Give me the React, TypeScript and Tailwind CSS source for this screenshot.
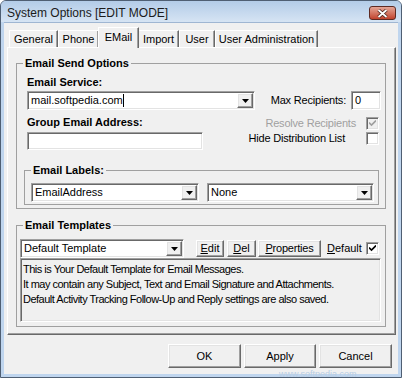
import React from 'react';

// classic 3D borders
const sunken =
  'border border-t-[#a0a0a0] border-l-[#a0a0a0] border-b-white border-r-white shadow-[inset_1px_1px_0_#696969,inset_-1px_-1px_0_#e3e3e3]';
const raised =
  'border border-t-white border-l-white border-b-[#696969] border-r-[#696969] shadow-[inset_-1px_-1px_0_#a0a0a0,inset_1px_1px_0_#e3e3e3]';

const Arrow = () => (
  <svg width="7" height="4" viewBox="0 0 7 4">
    <path d="M0 0h7L3.5 4z" fill="#000" />
  </svg>
);

const Combo = ({ value, className = '', caret = false }: { value: string; className?: string; caret?: boolean }) => (
  <div className={`${sunken} bg-white p-[1px] flex items-stretch ${className}`}>
    <span className="flex-1 flex items-center pl-[2px] leading-[13px] whitespace-nowrap">
      {value}
      {caret && <span className="inline-block w-[1px] h-[13px] bg-black" />}
    </span>
    <span className={`${raised} bg-[#f0f0f0] w-[16px] flex items-center justify-center`}>
      <Arrow />
    </span>
  </div>
);

const Check = ({ checked = false, disabled = false }: { checked?: boolean; disabled?: boolean }) => (
  <span className={`${sunken} w-[13px] h-[13px] flex items-center justify-center ${disabled ? 'bg-[#f0f0f0]' : 'bg-white'}`}>
    {checked && (
      <svg width="7" height="7" viewBox="0 0 7 7">
        <path d="M0 2.5l2.5 2.5L7 0.5" stroke={disabled ? '#a0a0a0' : '#000'} strokeWidth="1.6" fill="none" />
      </svg>
    )}
  </span>
);

const Btn = ({ children, className = '' }: { children: React.ReactNode; className?: string }) => (
  <button className={`${raised} bg-[#f0f0f0] flex items-center justify-center leading-[13px] ${className}`}>{children}</button>
);

const tabs = [
  { label: 'General', w: 'w-[49px]' },
  { label: 'Phone', w: 'w-[41px]' },
  { label: 'EMail', w: 'w-[41px]', active: true },
  { label: 'Import', w: 'w-[41px]' },
  { label: 'User', w: 'w-[36px]' },
  { label: 'User Administration', w: 'w-[103px]' },
];

export default function App() {
  return (
    <div className="relative w-[402px] h-[378px] bg-[#bfd5ee] border border-[#4f5f73] rounded-t-[6px] flex flex-col text-[11px] text-black font-['Liberation_Sans',Arial,sans-serif] overflow-hidden">
      {/* title bar */}
      <div className="h-[21px] flex items-center justify-between pl-[6px] pr-[5px] bg-gradient-to-b from-[#b3cce8] to-[#d6e4f3]">
        <span className="text-[12px] leading-[14px] text-[#1b1b1b] pt-[2px]">System Options [EDIT MODE]</span>
        <span className="w-[27px] h-[14px] mt-[3px] rounded-[3px] border border-[#5e2a22] bg-gradient-to-b from-[#e3a596] to-[#c1412c] flex items-center justify-center">
          <svg width="11" height="9" viewBox="0 0 11 9">
            <path d="M1.5 1l8 7M9.5 1l-8 7" stroke="#4a211a" strokeWidth="3.4" />
            <path d="M1.5 1l8 7M9.5 1l-8 7" stroke="#fff" strokeWidth="1.8" />
          </svg>
        </span>
      </div>

      {/* client area */}
      <div className="flex-1 mx-[3px] mb-[3px] bg-[#f0f0f0] border-t border-[#9fb6d2] flex flex-col">
        {/* tab strip */}
        <div className="pt-[3px] pl-[5px] h-[24px] flex items-end">
          {tabs.map((t) =>
            t.active ? (
              <div
                key={t.label}
                className={`${t.w} h-[21px] -mx-[1px] relative z-10 -mb-[1px] bg-[#f0f0f0] border-t border-l border-white border-r border-r-[#696969] shadow-[inset_-1px_0_0_#a0a0a0] flex items-start justify-center pt-[3px] leading-[13px]`}
              >
                {t.label}
              </div>
            ) : (
              <div
                key={t.label}
                className={`${t.w} h-[17px] border-t border-l border-white border-r border-r-[#696969] shadow-[inset_-1px_0_0_#a0a0a0] flex items-center justify-center leading-[13px]`}
              >
                {t.label}
              </div>
            )
          )}
        </div>

        {/* tab panel */}
        <div className="ml-[3px] w-[389px] h-[288px] border border-t-white border-l-white border-b-[#696969] border-r-[#696969] shadow-[inset_-1px_-1px_0_#a0a0a0] pl-[8px] pt-[9px]">
          {/* Email Send Options */}
          <fieldset className="w-[370px] border border-[#a0a0a0]">
            <legend className="ml-[6px] px-[2px] font-bold leading-[13px]">Email Send Options</legend>
            <div className="pl-[10px] pr-[4px] pt-[6px] pb-[3px]">
              <div className="flex items-end justify-between">
                <div className="flex flex-col">
                  <span className="font-bold leading-[13px]">Email Service:</span>
                  <Combo value="mail.softpedia.com" caret className="mt-[2px] w-[228px] h-[19px]" />
                </div>
                <div className="flex items-center gap-[5px]">
                  <span className="leading-[13px] tracking-[-0.2px]">Max Recipients:</span>
                  <div className={`${sunken} bg-white w-[30px] h-[19px] pl-[3px] flex items-center leading-[13px]`}>0</div>
                </div>
              </div>

              <div className="mt-[6px] flex items-start justify-between">
                <div className="flex flex-col">
                  <span className="font-bold leading-[13px]">Group Email Address:</span>
                  <div className={`${sunken} bg-white mt-[3px] w-[176px] h-[18px]`} />
                </div>
                <div className="flex flex-col items-end pr-[2px] tracking-[-0.2px]">
                  <div className="h-[15px] flex items-center">
                    <span className="text-[#a0a0a0] leading-[13px] mr-[10px]">Resolve Recipients</span>
                    <Check checked disabled />
                  </div>
                  <div className="h-[15px] flex items-center">
                    <span className="leading-[13px] mr-[21px]">Hide Distribution List</span>
                    <Check />
                  </div>
                </div>
              </div>

              <fieldset className="mt-[14px] -ml-[3px] mr-[2px] border border-[#a0a0a0] pl-[6px] pr-[4px] pt-[6px] pb-[2px]">
                <legend className="ml-[0px] px-[2px] font-bold leading-[13px]">Email Labels:</legend>
                <div className="flex gap-[8px]">
                  <Combo value="EmailAddress" className="w-[168px] h-[19px]" />
                  <Combo value="None" className="w-[167px] h-[19px]" />
                </div>
              </fieldset>
            </div>
          </fieldset>

          {/* Email Templates */}
          <fieldset className="mt-[10px] w-[370px] border border-[#a0a0a0]">
            <legend className="ml-[6px] px-[2px] font-bold leading-[13px]">Email Templates</legend>
            <div className="pl-[3px] pr-[3px] pt-[7px] pb-[4px]">
              <div className="flex items-center">
                <Combo value="Default Template" className="w-[164px] h-[19px]" />
                <Btn className="ml-[12px] w-[28px] h-[17px]"><span className="underline">E</span>dit</Btn>
                <Btn className="ml-[3px] w-[29px] h-[17px]"><span className="underline">D</span>el</Btn>
                <Btn className="ml-[2px] w-[63px] h-[17px] tracking-[-0.2px]"><span className="underline">P</span>roperties</Btn>
                <span className="ml-[6px] leading-[13px]"><span className="underline">D</span>efault</span>
                <span className="ml-auto mr-[3px]"><Check checked /></span>
              </div>
              <div className={`${sunken} bg-[#f0f0f0] w-[361px] h-[64px] pl-[2px] pt-[3px] leading-[15px] tracking-[-0.5px]`}>
                <div>This is Your Default Template for Email Messages.</div>
                <div>It may contain any Subject, Text and Email Signature and Attachments.</div>
                <div>Default Activity Tracking Follow-Up and Reply settings are also saved.</div>
              </div>
            </div>
          </fieldset>
        </div>

        {/* dialog buttons */}
        <div className="mt-[9px] pr-[6px] flex justify-end gap-[3px]">
          <Btn className="w-[73px] h-[24px]">OK</Btn>
          <Btn className="w-[72px] h-[24px]">Apply</Btn>
          <Btn className="w-[73px] h-[24px]">Cancel</Btn>
        </div>
      </div>

      {/* watermark url */}
      <div className="absolute left-[278px] top-[369px] text-[9px] leading-[9px] text-[#b8cde4] pointer-events-none">
        www.softpedia.com
      </div>
    </div>
  );
}
